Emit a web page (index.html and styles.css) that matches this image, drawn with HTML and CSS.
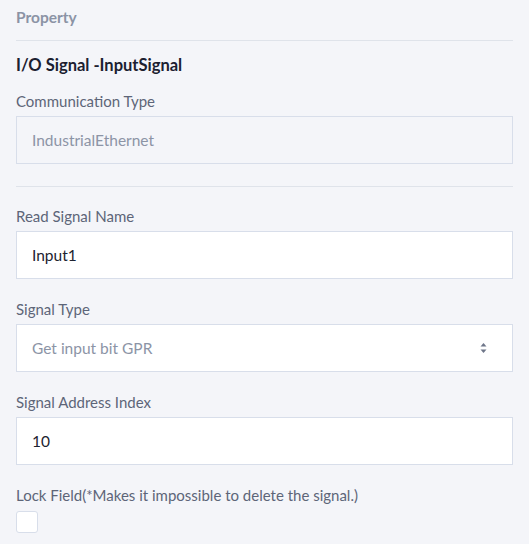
FILE: index.html
```html
<!DOCTYPE html>
<html>
<head>
<meta charset="utf-8">
<link rel="stylesheet" href="styles.css">
</head>
<body>
<div class="panel">
  <div class="panel-title">Property</div>
  <div class="section">
    <div class="section-title">I/O Signal -InputSignal</div>
    <div class="field">
      <div class="label">Communication Type</div>
      <div class="input disabled">IndustrialEthernet</div>
    </div>
  </div>
  <div class="section section-bottom">
    <div class="field">
      <div class="label">Read Signal Name</div>
      <div class="input">Input1</div>
    </div>
    <div class="field">
      <div class="label">Signal Type</div>
      <div class="input select">
        <span class="placeholder">Get input bit GPR</span>
        <svg class="arrows" width="7" height="12" viewBox="0 0 7 12"><path d="M3.5 1 L6.5 4.5 L0.5 4.5 Z" fill="#6e7689"/><path d="M0.5 7.5 L6.5 7.5 L3.5 11 Z" fill="#6e7689"/></svg>
      </div>
    </div>
    <div class="field">
      <div class="label">Signal Address Index</div>
      <div class="input">10</div>
    </div>
    <div class="field">
      <div class="label">Lock Field(*Makes it impossible to delete the signal.)</div>
      <div class="checkbox"></div>
    </div>
  </div>
</div>
</body>
</html>
```
FILE: styles.css
```css
html, body {
  margin: 0;
  padding: 0;
  background: #f4f5f9;
}
body {
  font-family: "Lato", "Noto Sans", sans-serif;
  font-size: 15px;
  color: #5d6578;
}
.panel {
  padding: 7px 16px 0 16px;
}
.panel-title {
  font-weight: 700;
  font-size: 15.5px;
  line-height: 20px;
  color: #8b93a5;
  padding-bottom: 13px;
  border-bottom: 1px solid #dfe3ea;
}
.section {
  padding-top: 14px;
  padding-bottom: 22px;
  border-bottom: 1px solid #dfe3ea;
}
.section-bottom {
  border-bottom: none;
  padding-top: 19px;
}
.section-title {
  font-weight: 700;
  font-size: 16.5px;
  line-height: 20px;
  color: #1b2030;
  margin-bottom: 16px;
}
.field + .field {
  margin-top: 20px;
}
.label {
  font-size: 15px;
  line-height: 20px;
  margin-bottom: 5px;
  color: #5d6578;
}
.input {
  box-sizing: border-box;
  height: 48px;
  border: 1px solid #d8deea;
  background: #ffffff;
  padding: 0 15px;
  display: flex;
  align-items: center;
  font-size: 15.5px;
  color: #1d2330;
}
.input.disabled {
  background: #f4f5f9;
  color: #8c94a6;
}
.select {
  justify-content: space-between;
  padding-right: 25px;
}
.placeholder {
  color: #8c94a6;
}
.arrows {
  display: block;
}
.checkbox {
  box-sizing: border-box;
  width: 22px;
  height: 22px;
  margin-top: 6px;
  border: 1px solid #d8deea;
  border-radius: 3px;
  background: #ffffff;
}
```
